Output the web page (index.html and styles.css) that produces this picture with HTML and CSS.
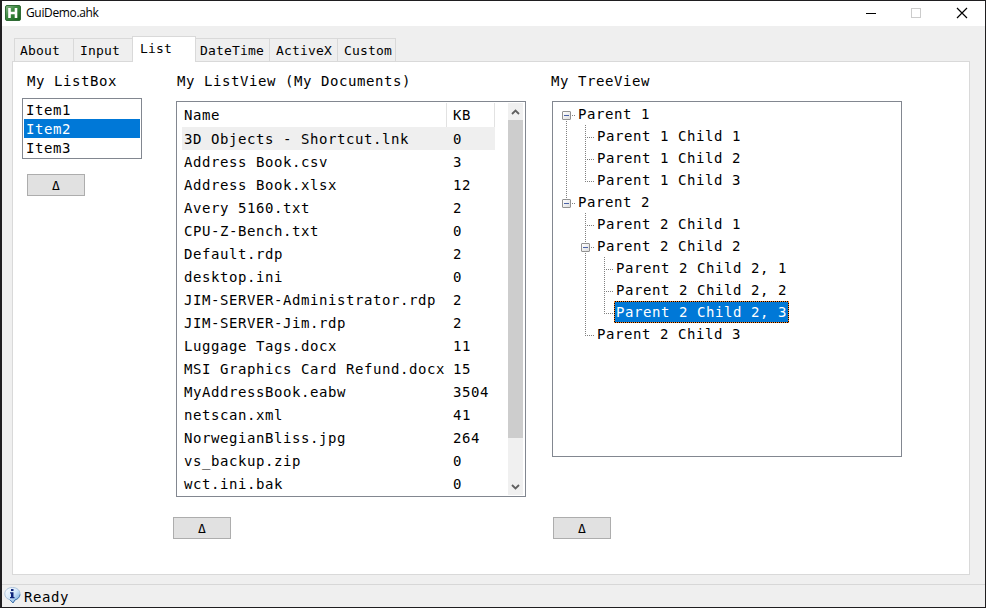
FILE: index.html
```
<!DOCTYPE html>
<html lang="en">
<head>
<meta charset="utf-8">
<title>GuiDemo.ahk</title>
<link rel="stylesheet" href="styles.css">
</head>
<body>
<div class="window">
  <header class="titlebar">
    <svg class="app-icon" width="16" height="16" viewBox="0 0 16 16">
      <defs><linearGradient id="g" x1="0" y1="0" x2="1" y2="1"><stop offset="0" stop-color="#8fb98f"/><stop offset=".4" stop-color="#3f8a43"/><stop offset="1" stop-color="#14601b"/></linearGradient></defs>
      <rect x=".5" y=".5" width="15" height="15" rx="1.5" fill="url(#g)" stroke="#2f6b35"/>
      <path d="M4.500 3v10M11 3v10M4.500 8H11" fill="none" stroke="#fff" stroke-width="2.600"/>
    </svg>
    <span class="title">GuiDemo.ahk</span>
    <svg class="controls" width="105" height="12" viewBox="0 0 105 12" fill="none">
      <path d="M0 6.500h10" stroke="#000"/>
      <rect x="45.500" y="1.500" width="9" height="9" stroke="#ccc"/>
      <path d="M91 1l10 10M101 1L91 11" stroke="#000" stroke-width="1.200"/>
    </svg>
  </header>
  <nav class="tabs">
    <div class="tab about">About</div>
    <div class="tab input">Input</div>
    <div class="tab active">List</div>
    <div class="tab datetime">DateTime</div>
    <div class="tab activex">ActiveX</div>
    <div class="tab custom">Custom</div>
  </nav>
  <main class="panel">
    <section class="col col-box">
      <div class="label">My ListBox</div>
      <div class="listbox">
        <div class="item">Item1</div>
        <div class="item selected">Item2</div>
        <div class="item">Item3</div>
      </div>
      <button class="btn">Δ</button>
    </section>
    <section class="col col-view">
      <div class="label">My ListView (My Documents)</div>
      <div class="listview">
        <div class="rows">
          <div class="row head"><span>Name</span><span>KB</span></div>
          <div class="row hot"><span>3D Objects - Shortcut.lnk</span><span>0</span></div>
          <div class="row"><span>Address Book.csv</span><span>3</span></div>
          <div class="row"><span>Address Book.xlsx</span><span>12</span></div>
          <div class="row"><span>Avery 5160.txt</span><span>2</span></div>
          <div class="row"><span>CPU-Z-Bench.txt</span><span>0</span></div>
          <div class="row"><span>Default.rdp</span><span>2</span></div>
          <div class="row"><span>desktop.ini</span><span>0</span></div>
          <div class="row"><span>JIM-SERVER-Administrator.rdp</span><span>2</span></div>
          <div class="row"><span>JIM-SERVER-Jim.rdp</span><span>2</span></div>
          <div class="row"><span>Luggage Tags.docx</span><span>11</span></div>
          <div class="row"><span>MSI Graphics Card Refund.docx</span><span>15</span></div>
          <div class="row"><span>MyAddressBook.eabw</span><span>3504</span></div>
          <div class="row"><span>netscan.xml</span><span>41</span></div>
          <div class="row"><span>NorwegianBliss.jpg</span><span>264</span></div>
          <div class="row"><span>vs_backup.zip</span><span>0</span></div>
          <div class="row"><span>wct.ini.bak</span><span>0</span></div>
        </div>
        <div class="scrollbar">
          <svg width="15" height="17" fill="none" stroke="#606060" stroke-width="1.800"><path d="M4 11l3.500-3.500L11 11"/></svg>
          <div class="thumb"></div>
          <svg width="15" height="17" fill="none" stroke="#606060" stroke-width="1.800"><path d="M4 7l3.500 3.500L11 7"/></svg>
        </div>
      </div>
      <button class="btn">Δ</button>
    </section>
    <section class="col col-tree">
      <div class="label">My TreeView</div>
      <div class="treeview">
        <ul class="tree">
          <li class="parent"><span class="node">Parent 1</span>
            <ul>
              <li><span class="node">Parent 1 Child 1</span></li>
              <li><span class="node">Parent 1 Child 2</span></li>
              <li><span class="node">Parent 1 Child 3</span></li>
            </ul>
          </li>
          <li class="parent"><span class="node">Parent 2</span>
            <ul>
              <li><span class="node">Parent 2 Child 1</span></li>
              <li class="parent"><span class="node">Parent 2 Child 2</span>
                <ul>
                  <li><span class="node">Parent 2 Child 2, 1</span></li>
                  <li><span class="node">Parent 2 Child 2, 2</span></li>
                  <li><span class="node selected">Parent 2 Child 2, 3</span></li>
                </ul>
              </li>
              <li><span class="node">Parent 2 Child 3</span></li>
            </ul>
          </li>
        </ul>
      </div>
      <button class="btn">Δ</button>
    </section>
  </main>
  <footer class="status">
    <svg width="17" height="17" viewBox="0 0 17 17">
      <defs><linearGradient id="b" x1="0" y1="0" x2="1" y2="1"><stop offset="0" stop-color="#fff"/><stop offset=".5" stop-color="#d5e9fb"/><stop offset="1" stop-color="#5d9ad8"/></linearGradient></defs>
      <path d="M8.500.5c4.500 0 7.500 2.700 7.500 6.400 0 3-2 5.200-5 6L9 16l-3-3.200C3 12 .8 9.900.8 6.900.8 3.200 4 .5 8.500.5z" fill="url(#b)" stroke="#9fb9d6" stroke-width=".8"/>
      <path d="M11 12.900L9 16l-3-3.200M16 7.500c-.3 2.700-2.200 4.700-5 5.400" fill="none" stroke="#4276ac"/>
      <path d="M7 2h2.500v2H7zM6 5.200h3.500V10h1v1.200H6V10h1V6.400H6z" fill="#10267c"/>
    </svg>
    <span>Ready</span>
  </footer>
</div>
</body>
</html>
```
FILE: styles.css
```
*, *::before, *::after { box-sizing: border-box; }
body {
  margin: 0;
  font-family: "DejaVu Sans Mono", monospace;
  font-size: 14px;
  letter-spacing: 0.571px;
  color: #000;
}
.window {
  width: 986px;
  height: 608px;
  display: flex;
  flex-direction: column;
  overflow: hidden;
  background: #efefef;
  border: 1px solid #1f1e20;
  border-left-width: 2px;
}
.titlebar {
  height: 25px;
  flex: none;
  display: flex;
  align-items: flex-start;
  padding: 4px 0 0 3px;
  background: #fff;
}
.title {
  margin-left: 5px;
  font: 12px/16px "Open Sans", "Noto Sans", sans-serif;
  letter-spacing: -0.35px;
}
.controls { margin: 2px 14px 0 auto; }

.tabs {
  height: 35px;
  flex: none;
  display: flex;
  align-items: flex-end;
  padding-left: 12px;
  font-size: 13px;
  letter-spacing: 0.174px;
}
.tab {
  height: 23px;
  line-height: 24px;
  padding-left: 5px;
  border: 1px solid #d9d9d9;
  border-bottom: 0;
}
.about { width: 60px; }
.input { width: 60px; margin-left: -1px; padding-left: 6px; border-right: 0; }
.active {
  width: 64px;
  height: 26px;
  line-height: 23px;
  margin-left: -1px;
  margin-bottom: -1px;
  padding-left: 7px;
  background: #fff;
  position: relative;
  z-index: 1;
}
.datetime { width: 75px; margin-left: -1px; padding-left: 4px; }
.activex { width: 69px; margin-left: -1px; padding-left: 6px; }
.custom { width: 59px; margin-left: -1px; padding-left: 6px; }

.panel {
  width: 958px;
  height: 514px;
  flex: none;
  margin-left: 10px;
  padding: 10px 0 0 9px;
  display: flex;
  background: #fff;
  border: 1px solid #d9d9d9;
}
.col-box { width: 151px; }
.col-view { width: 378px; }
.col-tree { width: 360px; }
.label { height: 20px; line-height: 19px; white-space: pre; }
.col-box .label { padding-left: 5px; }
.col-view .label { padding-left: 4px; }
.btn {
  display: block;
  width: 58px;
  height: 22px;
  margin: 0;
  padding: 1px 0 0;
  border: 1px solid #adadad;
  background: #e1e1e1;
  font: 13px "DejaVu Sans Mono", monospace;
  color: #000;
}
.col-box .btn { margin: 15px 0 0 5px; }
.col-view .btn { margin-top: 20px; }
.col-tree .btn { margin: 60px 0 0 2px; }

.listbox {
  width: 120px;
  height: 61px;
  margin-top: 6px;
  padding: 1px;
  border: 1px solid #828790;
}
.item { height: 19px; line-height: 21px; padding-left: 2px; }
.selected { background: #0078d7; color: #fff; }

.listview {
  width: 350px;
  height: 396px;
  margin: 9px 0 0 3px;
  padding: 1px 2px 1px 5px;
  display: flex;
  border: 1px solid #828790;
}
.rows { width: 313px; }
.row {
  height: 23px;
  line-height: 25px;
  display: grid;
  grid-template-columns: 265px 48px;
  grid-template-rows: 100%;
  white-space: pre;
}
.row span { padding-left: 2px; }
.row span + span { padding-left: 6px; }
.head { height: 24px; line-height: 25px; }
.head span { border-right: 1px solid #e2e2e2; }
.hot { background: #efefef; }
.scrollbar {
  width: 15px;
  margin-left: 13px;
  display: flex;
  flex-direction: column;
  justify-content: flex-start;
  background: #f0f0f0;
}
.thumb { height: 318px; margin-bottom: 40px; background: #cdcdcd; }

.treeview {
  width: 350px;
  height: 356px;
  margin: 9px 0 0 1px;
  padding: 1px 0 0 13px;
  border: 1px solid #828790;
}
.tree, .tree ul { margin: 0; padding: 0; list-style: none; }
.tree ul { margin-left: 9px; }
.tree li { position: relative; padding-left: 10px; }
.node {
  position: relative;
  display: block;
  width: max-content;
  height: 22px;
  line-height: 22px;
  padding: 0 2px;
  white-space: pre;
}
.tree .selected {
  line-height: 20px;
  padding: 0 1px;
  border: 1px dotted #ff8728;
  background: #0078d7 padding-box;
  background-color: #0078d7;
  box-shadow: inset 0 0 0 0 #000;
}
.tree li::before {
  content: "";
  position: absolute;
  left: 0;
  top: 0;
  width: 1px;
  height: 100%;
  background: repeating-linear-gradient(#808080 0 1px, transparent 1px 2px);
}
.tree li:last-child::before { height: 13px; }
.tree > li:first-child::before { top: 12px; height: calc(100% - 12px); }
.tree li::after {
  content: "";
  position: absolute;
  left: 0;
  top: 12px;
  width: 9px;
  height: 1px;
  background: repeating-linear-gradient(90deg, #808080 0 1px, transparent 1px 2px);
}
.parent > .node::before {
  content: "";
  position: absolute;
  z-index: 1;
  left: -14px;
  top: 8px;
  width: 9px;
  height: 9px;
  border: 1px solid #919191;
  border-radius: 1px;
  background: linear-gradient(#4b63a7, #4b63a7) center / 5px 1px no-repeat, linear-gradient(135deg, #fff, #dedede);
}
.tree .selected { background: #000; background: linear-gradient(#0078d7, #0078d7) padding-box, #000; }

.status {
  height: 23px;
  flex: none;
  margin-top: 9px;
  display: flex;
  align-items: flex-start;
  padding: 2px 0 0 2px;
  border-top: 1px solid #d7d7d7;
}
.status span { margin-left: 3px; line-height: 20px; }
```
